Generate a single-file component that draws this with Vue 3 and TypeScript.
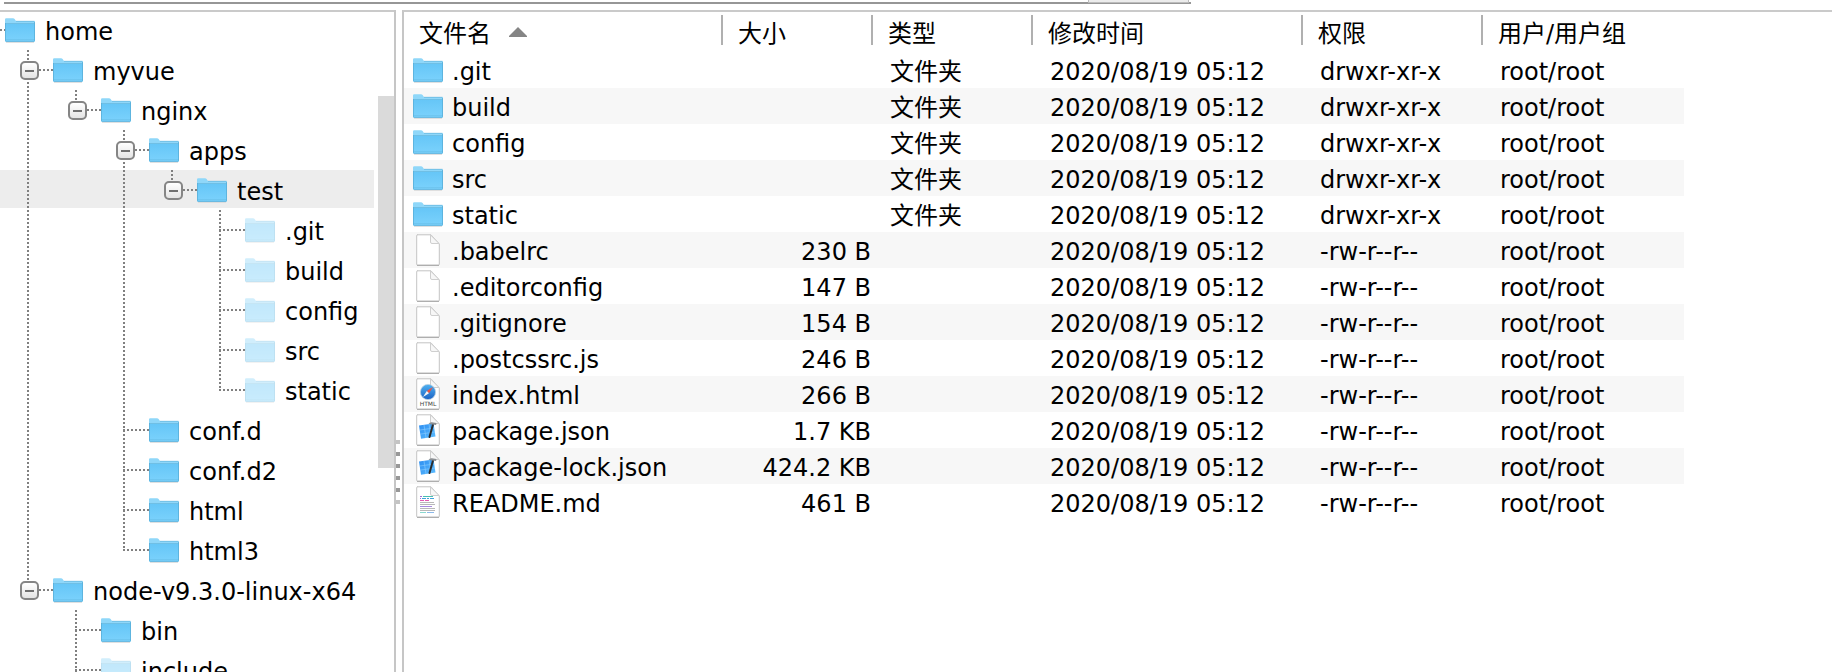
<script setup lang="ts">
import { ref } from 'vue'

type Guide = 'line' | 'blank' | 'tee' | 'elbow' | 'toggle' | 'toggle-last'

interface TreeRow {
  name: string
  guides: Guide[]
  pending?: boolean
}

interface FileRow {
  icon: 'folder' | 'blank' | 'html' | 'json' | 'md'
  name: string
  size: string
  kind: string
  mode: string
}

const tree: TreeRow[] = [
  { name: 'home', guides: [] },
  { name: 'myvue', guides: ['toggle'] },
  { name: 'nginx', guides: ['line', 'toggle-last'] },
  { name: 'apps', guides: ['line', 'blank', 'toggle'] },
  { name: 'test', guides: ['line', 'blank', 'line', 'toggle-last'] },
  { name: '.git', guides: ['line', 'blank', 'line', 'blank', 'tee'], pending: true },
  { name: 'build', guides: ['line', 'blank', 'line', 'blank', 'tee'], pending: true },
  { name: 'config', guides: ['line', 'blank', 'line', 'blank', 'tee'], pending: true },
  { name: 'src', guides: ['line', 'blank', 'line', 'blank', 'tee'], pending: true },
  { name: 'static', guides: ['line', 'blank', 'line', 'blank', 'elbow'], pending: true },
  { name: 'conf.d', guides: ['line', 'blank', 'tee'] },
  { name: 'conf.d2', guides: ['line', 'blank', 'tee'] },
  { name: 'html', guides: ['line', 'blank', 'tee'] },
  { name: 'html3', guides: ['line', 'blank', 'elbow'] },
  { name: 'node-v9.3.0-linux-x64', guides: ['toggle-last'] },
  { name: 'bin', guides: ['blank', 'tee'] },
  { name: 'include', guides: ['blank', 'tee'], pending: true },
]

const selected = ref('test')

const modified = '2020/08/19 05:12'
const owner = 'root/root'
const dir = (name: string): FileRow => ({ icon: 'folder', name, size: '', kind: '文件夹', mode: 'drwxr-xr-x' })
const file = (name: string, size: string, icon: FileRow['icon'] = 'blank'): FileRow => ({
  icon, name, size, kind: '', mode: '-rw-r--r--',
})

const files: FileRow[] = [
  dir('.git'),
  dir('build'),
  dir('config'),
  dir('src'),
  dir('static'),
  file('.babelrc', '230 B'),
  file('.editorconfig', '147 B'),
  file('.gitignore', '154 B'),
  file('.postcssrc.js', '246 B'),
  file('index.html', '266 B', 'html'),
  file('package.json', '1.7 KB', 'json'),
  file('package-lock.json', '424.2 KB', 'json'),
  file('README.md', '461 B', 'md'),
]

const isToggle = (g: Guide) => g === 'toggle' || g === 'toggle-last'
</script>

<template>
  <div class="window">
    <svg class="sprites" aria-hidden="true">
      <defs>
        <linearGradient id="folder-face" x1="0" y1="0" x2="0" y2="1">
          <stop offset="0" stop-color="#66c6f7" />
          <stop offset="1" stop-color="#7bd2fc" />
        </linearGradient>
        <linearGradient id="compass-face" x1="0" y1="0" x2="0" y2="1">
          <stop offset="0" stop-color="#4fb2f2" />
          <stop offset="1" stop-color="#1b62c4" />
        </linearGradient>
        <linearGradient id="blueprint-face" x1="0" y1="0" x2="1" y2="1">
          <stop offset="0" stop-color="#2c8df0" />
          <stop offset="1" stop-color="#5cbcff" />
        </linearGradient>
        <symbol id="icon-folder" viewBox="0 0 30 25">
          <path d="M1 24.300h28" stroke="#d9d9d9" stroke-width="1" />
          <path d="M0 1.500Q0 .3 1.200.3H8q1 0 1.600.8L11 3h18q1 0 1 1v6H0z" fill="#8fd7f9" />
          <path d="M0 6h30v16.500q0 1.200-1.200 1.200H1.200Q0 23.700 0 22.500z" fill="url(#folder-face)" />
          <path d="M0 5.500h30M11 3.300h18.500" stroke="#62b4dc" stroke-width=".7" />
          <path d="M0 21.500h30" stroke="#68bfea" stroke-width=".6" />
          <path d="M.4 5v17.500q0 .8.8.8h27.600q.8 0 .8-.8V4" fill="none" stroke="#59afd9" stroke-width=".9" />
        </symbol>
        <symbol id="icon-page" viewBox="0 0 24 32">
          <path d="M1 .8h14L23.300 10v20.300q0 .9-.9.9H1.600q-.9 0-.9-.9V1.500Q.7.800 1.400.8z" fill="#fff" stroke="#c4c4c4" stroke-width="1" />
          <path d="M1 31.300h22" stroke="#a4a4a4" stroke-width="1" />
          <path d="M14.500 1v7q0 1.500 1.500 1.500h7L14.500 1" fill="#f7f7f7" stroke="#cfcfcf" stroke-width="1" />
        </symbol>
      </defs>
    </svg>

    <div class="toolbar"><div class="tab"></div></div>

    <div class="panes">
      <nav class="tree-pane">
        <ul class="tree" role="tree">
          <li
            v-for="row in tree"
            :key="row.guides.length + row.name"
            role="treeitem"
            class="tree-row"
            :class="{ selected: row.name === selected }"
            @click="selected = row.name"
          >
            <span class="gutter" :class="{ root: row.guides.length === 0 }"></span>
            <span v-for="(g, i) in row.guides" :key="i" class="guide" :class="g">
              <button v-if="isToggle(g)" type="button" class="toggle" :aria-label="'− ' + row.name"></button>
            </span>
            <svg class="folder" :class="{ pending: row.pending }" aria-hidden="true"><use href="#icon-folder" /></svg>
            <span class="label">{{ row.name }}</span>
          </li>
        </ul>
        <div class="scroll"><div class="thumb"></div></div>
      </nav>

      <div class="divider"><i v-for="n in 6" :key="n"></i></div>

      <main class="file-pane">
        <table class="files">
          <colgroup>
            <col class="c-name" /><col class="c-size" /><col class="c-kind" />
            <col class="c-time" /><col class="c-mode" /><col class="c-owner" />
          </colgroup>
          <thead>
            <tr>
              <th scope="col" aria-sort="ascending">
                <button type="button" class="sort">
                  文件名
                  <svg class="arrow" viewBox="0 0 18 10" aria-hidden="true"><path d="M9 0l9 9v1H0V9z" fill="#858585" /></svg>
                </button>
              </th>
              <th scope="col"><button type="button" class="sort">大小</button></th>
              <th scope="col"><button type="button" class="sort">类型</button></th>
              <th scope="col"><button type="button" class="sort">修改时间</button></th>
              <th scope="col"><button type="button" class="sort">权限</button></th>
              <th scope="col"><button type="button" class="sort">用户/用户组</button></th>
            </tr>
          </thead>
          <tbody>
            <tr v-for="f in files" :key="f.name">
              <td class="name">
                <div class="entry">
                  <svg v-if="f.icon === 'folder'" class="folder" aria-hidden="true"><use href="#icon-folder" /></svg>
                  <svg v-else class="page" viewBox="0 0 24 32" aria-hidden="true">
                    <use href="#icon-page" width="24" height="32" />
                    <g v-if="f.icon === 'html'">
                      <circle cx="12" cy="14" r="7.600" fill="url(#compass-face)" stroke="#b5cde0" stroke-width=".8" />
                      <path d="M17 9l-4 6.200-2.200-2.200z" fill="#f0523d" />
                      <path d="M7 19l3.800-6 2.200 2.200z" fill="#f4f4f4" />
                      <text x="12" y="28" text-anchor="middle" font-size="6" fill="#444">HTML</text>
                    </g>
                    <g v-else-if="f.icon === 'json'">
                      <path d="M3 11.500L17.500 9.500l2 13L5 24.800z" fill="url(#blueprint-face)" />
                      <path d="M4 16l14-2M5 20l14-2M8 11l2 13M13 10l2 13" stroke="#8accff" stroke-width=".6" />
                      <path d="M17 10.500L13.500 23" stroke="#2b2b2b" stroke-width="2" stroke-linecap="round" />
                      <path d="M12.500 9.500q2.500-2 5-1l3 .5-.4 2-5.600-.7z" fill="#8b8f93" />
                    </g>
                    <g v-else-if="f.icon === 'md'" stroke-width="1" fill="none">
                      <path d="M4 10.500h2M4 12.500h1" stroke="#a26ad8" />
                      <path d="M7 10.500h10" stroke="#49bfb0" />
                      <path d="M6 12.500h4m1 0h2m1 0h4" stroke="#40a4dc" />
                      <path d="M4 14.500h4m1 0h4" stroke="#e35bb0" />
                      <path d="M4 16.500h14M4 18.500h15M4 22.500h15M4 24.500h15" stroke="#b8b8b8" />
                      <path d="M4 20.500h12" stroke="#a98be0" />
                      <path d="M4 26.500h6" stroke="#8ad9cf" />
                      <path d="M11 26.500h7" stroke="#8bb9ea" />
                    </g>
                  </svg>
                  <span>{{ f.name }}</span>
                </div>
              </td>
              <td class="size">{{ f.size }}</td>
              <td>{{ f.kind }}</td>
              <td>{{ modified }}</td>
              <td>{{ f.mode }}</td>
              <td>{{ owner }}</td>
            </tr>
          </tbody>
        </table>
      </main>
    </div>
  </div>
</template>

<style>
body {
  margin: 0;
  background: #fff;
}
</style>

<style scoped>
.window {
  display: flex;
  flex-direction: column;
  height: 100vh;
  overflow: hidden;
  background: #fff;
  color: #000;
  font-family: 'DejaVu Sans', 'Noto Sans CJK SC', sans-serif;
  font-size: 24px;
  line-height: 32px;
}

.sprites {
  position: absolute;
  width: 0;
  height: 0;
}

.toolbar {
  display: flex;
  justify-content: flex-end;
  box-sizing: border-box;
  flex: none;
  width: 65%;
  height: 4px;
  margin-bottom: 6px;
  border-left: 4px solid #fff;
  background: linear-gradient(#fff 2px, #969696 2px);
}

.tab {
  box-sizing: border-box;
  width: 101px;
  height: 3px;
  margin-right: 2px;
  border: 1px solid #bcbcbc;
  border-top: 0;
  background: #ececec;
}

.panes {
  display: flex;
  flex: 1;
  min-height: 0;
}

.tree-pane {
  display: flex;
  box-sizing: border-box;
  flex: none;
  width: 396px;
  border-right: 2px solid #c6c6c6;
  box-shadow: inset 0 2px #cacaca;
  overflow: hidden;
}

.tree {
  flex: 1;
  margin: 0;
  padding: 0;
  list-style: none;
}

.tree-row {
  display: flex;
  height: 40px;
  white-space: nowrap;
}

.tree-row.selected {
  background: linear-gradient(#ededed 38px, transparent 38px);
}

.gutter {
  flex: none;
  width: 5px;
}

.gutter.root {
  background: repeating-linear-gradient(90deg, #808080 0 2px, transparent 2px 4px) 0 19px / 5px 2px no-repeat;
}

.guide {
  --down: repeating-linear-gradient(#808080 0 2px, transparent 2px 4px);
  --across: repeating-linear-gradient(90deg, #808080 0 2px, transparent 2px 4px);
  display: flex;
  align-items: center;
  flex: none;
  width: 48px;
  background-repeat: no-repeat;
}

.line {
  background-image: var(--down);
  background-position: 22px 0;
  background-size: 2px 40px;
}

.tee,
.toggle-last,
.elbow,
.guide.toggle {
  background-image: var(--down), var(--across);
  background-position: 22px 0, 22px 19px;
}

.tee,
.guide.toggle {
  background-size: 2px 40px, 26px 2px;
}

.elbow,
.toggle-last {
  background-size: 2px 20px, 26px 2px;
}

button.toggle {
  width: 19px;
  height: 19px;
  margin: 1px 0 0 15px;
  padding: 0;
  border: 2px solid #858585;
  border-radius: 5px;
  background: linear-gradient(#707070, #707070) center / 9px 2px no-repeat, linear-gradient(#fff, #e4e4e4);
}

.folder {
  flex: none;
  align-self: center;
  width: 30px;
  height: 25px;
}

.folder.pending {
  opacity: 0.4;
}

.label {
  padding: 6px 0 0 10px;
}

.scroll {
  display: flex;
  justify-content: flex-end;
  flex: none;
  width: 20px;
  padding-top: 86px;
}

.thumb {
  width: 16px;
  height: 372px;
  background: #dadada;
}

.divider {
  display: flex;
  flex-direction: column;
  gap: 8px;
  box-sizing: border-box;
  flex: none;
  width: 6px;
  padding-top: 430px;
}

.divider i {
  width: 4px;
  height: 4px;
  background: #989898;
}

.divider i:first-child,
.divider i:last-child {
  background: #c4c4c4;
}

.file-pane {
  flex: 1;
  min-width: 0;
  border-top: 2px solid #cacaca;
  border-left: 2px solid #c6c6c6;
  overflow: hidden;
}

.files {
  width: 1280px;
  border-collapse: collapse;
  table-layout: fixed;
}

.c-name { width: 319px; }
.c-size { width: 150px; }
.c-kind { width: 160px; }
.c-time { width: 270px; }
.c-mode { width: 180px; }

th {
  height: 40px;
  padding: 0;
  font-weight: 400;
  text-align: left;
  background: linear-gradient(#b0b0b0, #b0b0b0) right 3px / 2px 30px no-repeat;
}

th:last-child {
  background: none;
}

.sort {
  display: flex;
  align-items: center;
  gap: 18px;
  width: 100%;
  padding: 4px 0 0 15px;
  border: 0;
  background: none;
  color: inherit;
  font: inherit;
  white-space: nowrap;
}

.arrow {
  width: 18px;
  height: 10px;
  margin-bottom: 4px;
}

td {
  box-sizing: border-box;
  height: 36px;
  padding: 4px 0 0 17px;
  white-space: nowrap;
}

tbody tr:nth-child(even) {
  background: #f7f7f7;
}

td.name {
  padding: 0 0 0 9px;
}

td.size {
  padding-right: 2px;
  text-align: right;
}

.entry {
  display: flex;
  gap: 9px;
  height: 36px;
}

.entry span {
  padding-top: 4px;
}

.page {
  flex: none;
  align-self: center;
  width: 24px;
  height: 32px;
  margin: 0 3px;
}
</style>
